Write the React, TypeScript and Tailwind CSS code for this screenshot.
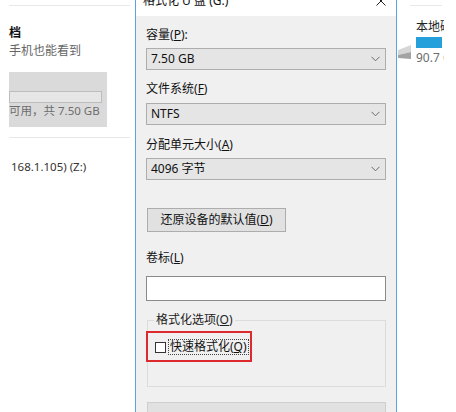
import React from "react";

const Chevron = () => (
  <svg width="9" height="6" viewBox="0 0 9 6" className="flex-none">
    <path d="M0.5 0.8 L4.5 4.8 L8.5 0.8" fill="none" stroke="#6b6b6b" strokeWidth="1" />
  </svg>
);

const Select = ({ value }: { value: string }) => (
  <div className="h-[22px] bg-[#e5e5e5] border border-[#adadad] flex items-center pl-[4px] pr-[5px] text-[12px]">
    <span>{value}</span>
    <span className="ml-auto">
      <Chevron />
    </span>
  </div>
);

const Label = ({ text, k, tail }: { text: string; k: string; tail?: string }) => (
  <div className="text-[12px] leading-4">
    {text}(<span className="underline">{k}</span>){tail}
  </div>
);

const App = () => {
  return (
    <div className="w-[456px] h-[412px] overflow-hidden bg-white flex text-[#111] font-['Noto_Sans','Noto_Sans_CJK_SC',sans-serif]">
      {/* explorer, left side */}
      <div className="w-[135px] flex-none pl-[9px] pt-[5px]">
        <div className="h-px w-[121px] bg-[#e8e8e8]" />
        <div className="mt-[19px] text-[12px] leading-4 font-bold">档</div>
        <div className="mt-[2px] text-[12px] leading-4 text-[#666]">手机也能看到</div>
        <div className="mt-[13px] w-[98px] h-[55px] bg-[#dadada] pt-[19px]">
          <div className="h-[12px] w-[93px] bg-[#e6e6e6] border border-[#bdbdbd]" />
          <div className="text-[11.5px] leading-4 text-[#6d6d6d] whitespace-nowrap">可用，共 7.50 GB</div>
        </div>
        <div className="mt-[10px] h-px w-[121px] bg-[#e8e8e8]" />
        <div className="mt-[21px] ml-[2px] text-[11.5px] leading-4 text-[#333] whitespace-nowrap">168.1.105) (Z:)</div>
      </div>

      {/* format dialog */}
      <div className="w-[262px] h-[426px] flex-none -mt-[14px] border-x border-[#5ba4de] bg-[#f0f0f0] flex flex-col">
        <div className="h-[30px] flex-none bg-white flex items-center pl-[7px] text-[12px]">
          <span>格式化 U 盘 (G:)</span>
          <svg width="10" height="10" viewBox="0 0 10 10" className="ml-auto mr-[10px]">
            <path d="M0.5 0.5 L9.5 9.5 M9.5 0.5 L0.5 9.5" stroke="#222" strokeWidth="1" />
          </svg>
        </div>
        <div className="pl-[10px] pr-[10px] flex flex-col">
          <div className="mt-[11px]">
            <Label text="容量" k="P" tail=":" />
          </div>
          <div className="mt-[5px]">
            <Select value="7.50 GB" />
          </div>
          <div className="mt-[11px]">
            <Label text="文件系统" k="F" />
          </div>
          <div className="mt-[6px]">
            <Select value="NTFS" />
          </div>
          <div className="mt-[12px]">
            <Label text="分配单元大小" k="A" />
          </div>
          <div className="mt-[5px]">
            <Select value="4096 字节" />
          </div>
          <button className="mt-[28px] ml-px w-[139px] h-[24px] bg-[#e1e1e1] border border-[#adadad] text-[12px] leading-4 flex items-center justify-center">
            还原设备的默认值(<span className="underline">D</span>)
          </button>
          <div className="mt-[18px]">
            <Label text="卷标" k="L" />
          </div>
          <div className="mt-[10px] h-[25px] bg-white border border-[#8a8a8a]" />
          <div className="relative mt-[19px] ml-px w-[239px] h-[67px] border border-[#dcdcdc]">
            <div className="absolute -top-[9px] left-[6px] px-[2px] bg-[#f0f0f0] text-[12px] leading-4 text-[#222]">
              格式化选项(<span className="underline">O</span>)
            </div>
            <div className="mt-[18px] ml-[7px] flex items-center">
              <div className="w-[11px] h-[11px] bg-white border border-[#333]" />
              <div className="ml-[2px] px-[1px] h-[16px] border border-dotted border-[#444] text-[12px] leading-[14px] flex items-center">
                快速格式化(<span className="underline">Q</span>)
              </div>
            </div>
            {/* red highlight annotation */}
            <div className="absolute -left-[2px] top-[10px] w-[106px] h-[31px] border-2 border-[#dd2a2e]" />
          </div>
          <div className="mt-[15px] ml-px w-[239px] h-[24px] bg-[#e1e1e1] border border-[#cfcfcf]" />
        </div>
      </div>

      {/* explorer, right side */}
      <div className="flex-1 pt-[5px]">
        <div className="ml-[13px] w-[32px] h-px bg-[#e8e8e8]" />
        <div className="flex">
          <svg width="13" height="16" viewBox="0 0 13 16" className="mt-[37px] ml-px flex-none">
            <polygon points="0,7 13,2 13,9 0,12" fill="#d6d6d6" />
            <polygon points="0,12 13,9 13,16 0,15" fill="#a3a3a3" />
          </svg>
          <div className="ml-[5px] mt-[13px] w-[28px] overflow-hidden">
            <div className="text-[12px] leading-4 whitespace-nowrap text-[#222]">本地磁盘 (C:)</div>
            <div className="mt-[2px] w-[26px] h-[11px] bg-[#26a0da]" />
            <div className="mt-[2px] text-[12px] leading-4 whitespace-nowrap text-[#6d6d6d]">90.7 GB 可用</div>
          </div>
        </div>
      </div>
    </div>
  );
};

export default App;
